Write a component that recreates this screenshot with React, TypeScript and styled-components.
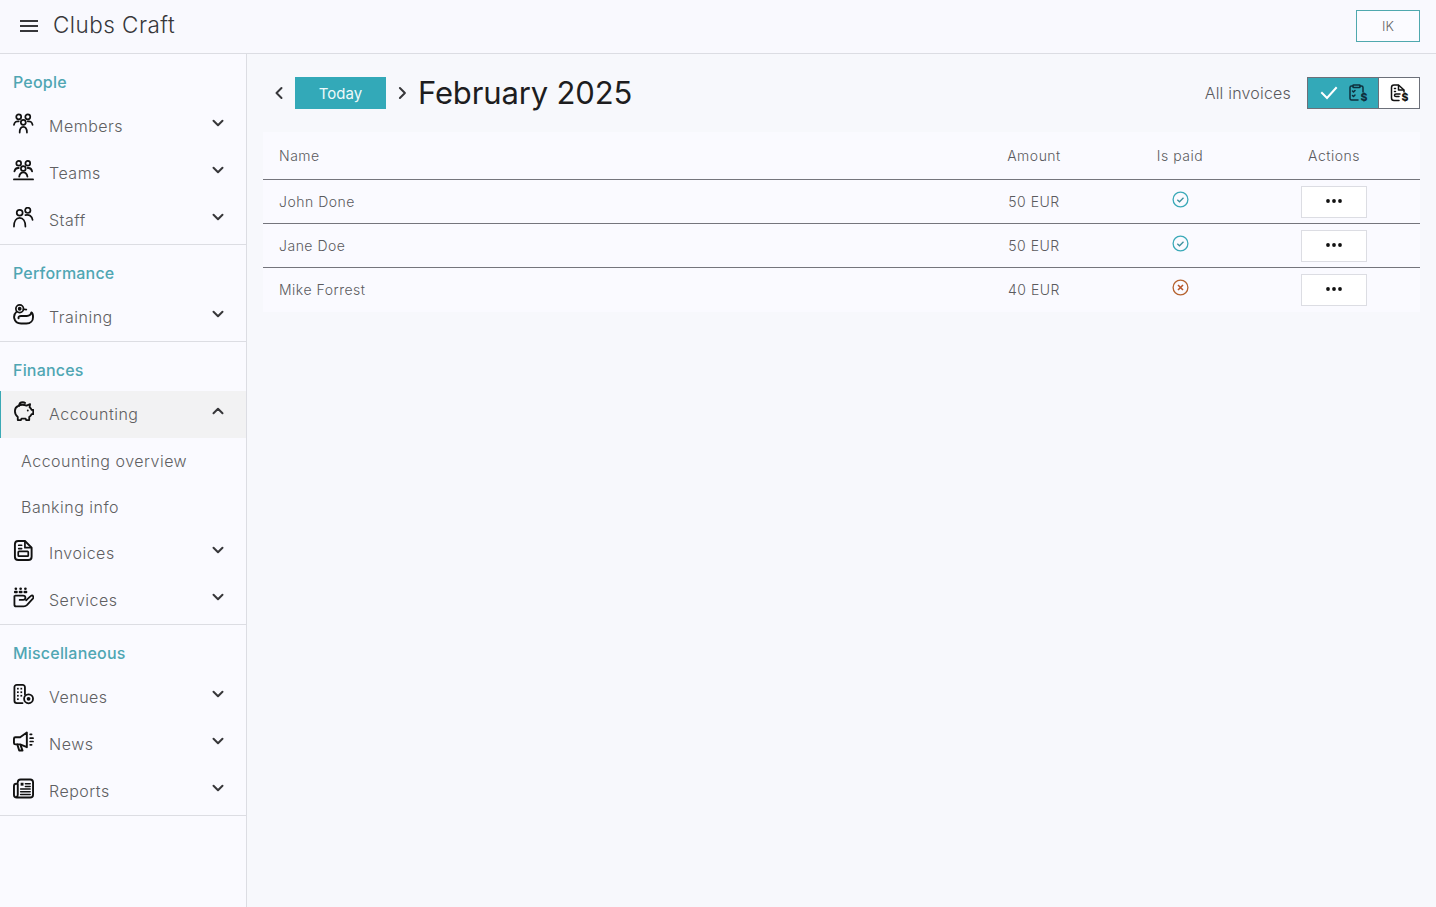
import React from "react";
import styled, { createGlobalStyle } from "styled-components";

const Global = createGlobalStyle`
  html, body { margin: 0; padding: 0; height: 100%; background: #f7f8fc; }
  body { font-family: Inter, "Open Sans", "Liberation Sans", sans-serif; font-weight: 300; color: #3a3a3a; overflow: hidden; }
  * { box-sizing: border-box; }
`;

const Page = styled.div`
  width: 1436px;
  height: 907px;
  display: flex;
  flex-direction: column;
`;
const Header = styled.header`
  height: 54px;
  flex: none;
  display: flex;
  align-items: center;
  justify-content: space-between;
  padding: 0 16px 2px 19px;
  background: #f9f9fe;
  border-bottom: 1px solid #dcdde3;
`;
const Brand = styled.div`
  display: flex;
  align-items: center;
  gap: 14px;
  font-size: 22.5px;
  letter-spacing: 0.45px;
  line-height: 30px;
  color: #37373a;
`;
const BrandText = styled.span`
  margin-top: -1px;
`;
const UserButton = styled.button`
  width: 64px;
  height: 32px;
  border: 1px solid #4fa8ae;
  background: #fbfbff;
  color: #666;
  font: 300 13px Inter, sans-serif;
`;
const Body = styled.div`
  flex: 1;
  display: flex;
  min-height: 0;
`;
const Sidebar = styled.aside`
  width: 247px;
  flex: none;
  background: #fafaff;
  border-right: 1px solid #dcdde3;
`;
const Section = styled.section`
  border-bottom: 1px solid #dcdde3;
`;
const SectionTitle = styled.h3`
  margin: 0;
  height: 49px;
  padding: 17px 0 0 13px;
  font-size: 16px;
  line-height: 22px;
  font-weight: 500;
  letter-spacing: 0.2px;
  color: #4fa6b3;
`;
const NavRow = styled.div<{ $active?: boolean }>`
  height: 47px;
  display: flex;
  align-items: center;
  padding: 0 20px 0 ${(p) => (p.$active ? 12 : 13)}px;
  background: ${(p) => (p.$active ? "#f2f2f3" : "transparent")};
  border-left: ${(p) => (p.$active ? "1px solid #3aa9b5" : "none")};
`;
const IconSlot = styled.span`
  width: 36px;
  height: 24px;
  margin-top: -6px;
  display: flex;
  align-items: center;
  color: #111;
`;
const NavLabel = styled.span`
  flex: 1;
  margin-top: -2px;
  font-size: 16px;
  letter-spacing: 0.5px;
  color: #5f5f62;
`;
const Caret = styled.span`
  display: flex;
  margin-top: -8px;
  color: #37373a;
`;
const SubRow = styled.div`
  height: 46px;
  padding-left: 21px;
  display: flex;
  align-items: center;
  font-size: 16px;
  letter-spacing: 0.5px;
  color: #5f5f62;
`;
const Main = styled.main`
  flex: 1;
  padding: 23px 16px 0;
`;
const Toolbar = styled.div`
  height: 32px;
  display: flex;
  align-items: center;
`;
const ChevronButton = styled.span`
  width: 32px;
  display: flex;
  justify-content: center;
  color: #37373a;
`;
const TodayButton = styled.button`
  width: 91px;
  height: 32px;
  padding: 0;
  border: none;
  background: #33a9b8;
  color: #eef9fa;
  font: 400 15px Inter, sans-serif;
`;
const MonthTitle = styled.h1`
  margin: -2px 0 0;
  font-size: 31px;
  font-weight: 400;
  letter-spacing: -0.15px;
  color: #1d1d20;
  flex: 1;
`;
const FilterLabel = styled.span`
  margin-right: 16px;
  font-size: 16px;
  letter-spacing: 0.2px;
  color: #5a5a5e;
`;
const Toggle = styled.div`
  width: 113px;
  height: 32px;
  display: flex;
  border: 1px solid #6c7079;
`;
const ToggleOn = styled.div`
  width: 71px;
  display: flex;
  align-items: center;
  justify-content: space-between;
  padding: 0 9px 0 12px;
  background: #33a9b8;
  border-right: 1px solid #6c7079;
`;
const ToggleOff = styled.div`
  flex: 1;
  display: flex;
  align-items: center;
  justify-content: center;
  padding-left: 1px;
  background: #fff;
`;
const Card = styled.div`
  margin-top: 23px;
  background: #fafaff;
`;
const TableRow = styled.div<{ $head?: boolean; $last?: boolean }>`
  height: ${(p) => (p.$head ? 48 : 44)}px;
  display: grid;
  grid-template-columns: 1fr 148px 144px 164px 4px;
  align-items: center;
  padding: 0 0 0 16px;
  border-bottom: 1px solid ${(p) => (p.$last ? "transparent" : "#74757c")};
  font-size: 14px;
  letter-spacing: 0.5px;
  color: #5a5a5e;
`;
const Cell = styled.div<{ $center?: boolean }>`
  display: flex;
  justify-content: ${(p) => (p.$center ? "center" : "flex-start")};
  align-items: center;
`;
const StatusCell = styled(Cell)`
  margin-top: -5px;
`;
const ActionsButton = styled.button`
  width: 66px;
  height: 32px;
  display: flex;
  align-items: center;
  justify-content: center;
  background: #fff;
  border: 1px solid #dcdde3;
  padding: 0 0 2px;
`;

const S = { fill: "none", stroke: "currentColor", strokeWidth: 1.8, strokeLinecap: "round" as const, strokeLinejoin: "round" as const };

const Ico = ({ children }: { children: React.ReactNode }) => (
  <svg width="21" height="21" viewBox="0 0 22 22" {...S}>{children}</svg>
);

const Members = () => (
  <Ico>
    <circle cx="6" cy="4" r="2.600" /><circle cx="15.500" cy="4" r="2.600" /><circle cx="10.800" cy="9.800" r="2.600" />
    <path d="M1 12.500c.5-3 2.500-4.200 5-3.700M20.500 12.500c-.5-3-2.500-4.200-5-3.700M7 20.500c0-3.500 1.500-6 3.800-6s3.800 2.500 3.800 6" />
  </Ico>
);
const Teams = () => (
  <Ico>
    <circle cx="6" cy="3.500" r="2.500" /><circle cx="15.500" cy="3.500" r="2.500" /><circle cx="10.800" cy="9" r="2.500" />
    <path d="M1.500 12c.5-2.800 2-3.900 4.500-3.600M20 12c-.5-2.800-2-3.900-4.500-3.600M6.500 17.500c.5-3 2-4.500 4.300-4.500s3.800 1.500 4.300 4.500M1 20.300h20" strokeWidth="1.900" />
  </Ico>
);
const Staff = () => (
  <Ico>
    <circle cx="7" cy="6" r="3.100" /><circle cx="15.500" cy="3.500" r="2.800" />
    <path d="M1 20.500c0-5.500 2.400-9 6-9s6 3.500 6 9M13 8.500c4-.8 7 1 7.500 5" />
  </Ico>
);
const Training = () => (
  <Ico>
    <circle cx="7" cy="5" r="4" /><circle cx="7" cy="5" r="1.100" fill="currentColor" />
    <path d="M3.800 8C1.500 10 .8 12.500 1.300 15c.8 3.500 3.500 5.500 7.200 5.500h5.500c4.500 0 7-3 7-7 0-2.500-.6-4-1.800-4.700-.5 2.700-2.200 3.700-4.700 3.700H8.500c-2.200 0-3 1-2.700 2.500" strokeWidth="2" />
    <path d="M11 5.500l3 .3" />
  </Ico>
);
const Piggy = () => (
  <Ico>
    <path d="M2 10.500c0 2.800 1.200 4.900 3 6.300v3.200h3.200l.7-1.500h4.300l.7 1.500H17v-3.200c1.100-.8 2-1.900 2.500-3.100h1.700V9.200h-1.700c-.5-1.100-1.200-2-2.100-2.700l.5-3.200-3.700 1.500c-2.800-1-6.500-1-8.700.3C3.500 6 2 8 2 10.500z" strokeWidth="1.900" />
    <path d="M6.500 5c0-2.200 1.700-3.700 3.800-3.700 1 0 1.800.3 2.400.8" strokeWidth="1.900" />
    <circle cx="15.500" cy="10" r="1" fill="currentColor" stroke="none" />
  </Ico>
);
const Invoice = () => (
  <Ico>
    <path d="M5.500 1H12.500l7 7v9.500c0 2-1.500 3.500-3.500 3.500H5.500c-2 0-3.500-1.500-3.500-3.500v-13C2 2.500 3.500 1 5.500 1z" strokeWidth="2" />
    <path d="M12.500 1.500V8h6.500M6 5.500h3M6 9h3" />
    <rect x="5.500" y="12" width="10.500" height="5" rx=".8" />
  </Ico>
);
const Services = () => (
  <Ico>
    <g fill="currentColor" stroke="none">
      <circle cx="3" cy="1.800" r="1.400" /><circle cx="8" cy="1.800" r="1.400" /><circle cx="13" cy="1.800" r="1.400" />
      <rect x="1" y="4" width="4" height="2.600" rx="1" /><rect x="6" y="4" width="4" height="2.600" rx="1" /><rect x="11" y="4" width="4" height="2.600" rx="1" />
    </g>
    <path d="M2.500 9h8c1.500 0 2.500 1 2.500 2.300S12 13.500 10.500 13.500H7" strokeWidth="1.900" />
    <path d="M1.500 9.500v9c0 1 .7 1.800 1.800 1.800h8c1.500 0 2.500-.6 3.500-1.600l6-6.500c1.300-1.500.2-3.700-1.500-3.200-.7.200-1.300.7-5.500 5" strokeWidth="1.900" />
  </Ico>
);
const Venues = () => (
  <Ico>
    <path d="M12.500 11V3.500C12.500 2 11.500 1 10 1H4C2.500 1 1.500 2 1.500 3.500v14c0 1.500 1 2.500 2.500 2.500h6" strokeWidth="1.900" />
    <circle cx="16.300" cy="15.500" r="4.700" strokeWidth="1.900" /><circle cx="16.300" cy="15.500" r="1.100" fill="currentColor" />
    <g fill="currentColor" stroke="none">
      <rect x="4.200" y="4" width="1.800" height="1.800" /><rect x="7.800" y="4" width="1.800" height="1.800" />
      <rect x="4.200" y="7.700" width="1.800" height="1.800" /><rect x="7.800" y="7.700" width="1.800" height="1.800" />
      <rect x="4.200" y="11.400" width="1.800" height="1.800" /><rect x="7.800" y="11.400" width="1.800" height="1.800" />
      <rect x="4.200" y="15" width="1.800" height="1.800" />
    </g>
  </Ico>
);
const News = () => (
  <Ico>
    <path d="M14.500 1.500v15.500L7.500 14H2.500C1.500 14 1 13.400 1 12.500V8c0-1 .5-1.500 1.500-1.500h5z" strokeWidth="2" />
    <path d="M4.500 14l2 6.500h3.500l-2-5.500" strokeWidth="2" />
    <path d="M18 3.500h1.500M18 7.500h3M18 11h3M18 14.500h1.500" strokeWidth="1.800" />
  </Ico>
);
const Reports = () => (
  <Ico>
    <path d="M5 4.500c0-2 1-3 3-3h10c2 0 3 1 3 3v13c0 2-1 3-3 3H4c-2 0-3-1-3-3V8.500C1 7 2 6 3.500 6H5v11.500c0 1-.5 2-1.500 2.500" strokeWidth="2" />
    <rect x="8" y="5" width="3" height="3" fill="currentColor" stroke="none" />
    <path d="M13 6h5M13 9h5M8 11.500h10M8 14.500h10M8 17.200h10" strokeWidth="1.600" />
  </Ico>
);

const Down = () => (
  <svg width="16" height="16" viewBox="0 0 16 16" fill="none" stroke="currentColor" strokeWidth="2" strokeLinecap="round" strokeLinejoin="round"><path d="M3.500 5.700l4.500 4.500 4.500-4.500" /></svg>
);
const Up = () => (
  <svg width="16" height="16" viewBox="0 0 16 16" fill="none" stroke="currentColor" strokeWidth="2" strokeLinecap="round" strokeLinejoin="round"><path d="M3.500 10.300l4.500-4.500 4.500 4.500" /></svg>
);

const Menu = () => (
  <svg width="20" height="14" viewBox="0 0 20 14" stroke="#37373a" strokeWidth="2"><path d="M1 2h18M1 7h18M1 12h18" /></svg>
);
const Left = () => (
  <svg width="12" height="14" viewBox="0 0 12 14" fill="none" stroke="currentColor" strokeWidth="2" strokeLinecap="round" strokeLinejoin="round"><path d="M8.500 2l-5 5 5 5" /></svg>
);
const Right = () => (
  <svg width="12" height="14" viewBox="0 0 12 14" fill="none" stroke="currentColor" strokeWidth="2" strokeLinecap="round" strokeLinejoin="round"><path d="M3.900 2l5 5-5 5" /></svg>
);

const Check = () => (
  <svg width="18" height="14" viewBox="0 0 18 14" fill="none" stroke="#fff" strokeWidth="2" strokeLinecap="square"><path d="M2 7l5 5 9-10" /></svg>
);
const PaidList = () => (
  <svg width="20" height="22" viewBox="0 0 20 22" fill="none" stroke="#0e2f3d" strokeWidth="1.500" strokeLinecap="round" strokeLinejoin="round">
    <path d="M4 4H2.500C1.500 4 1 4.600 1 5.500v11c0 1 .5 1.500 1.500 1.500H9M11 4h1.500c1 0 1.500.6 1.500 1.500V10" />
    <rect x="4" y="3" width="7" height="2.500" rx=".5" />
    <path d="M3.500 9l1 1 1.500-1.500M3.500 13.500l1 1 1.500-1.500" />
    <text x="11.500" y="18.500" fontSize="10.500" fontWeight="800" fill="#0e2f3d" stroke="none" fontFamily="Inter, sans-serif">$</text>
  </svg>
);
const OpenList = () => (
  <svg width="20" height="22" viewBox="0 0 20 22" fill="none" stroke="#111" strokeWidth="1.500" strokeLinecap="round" strokeLinejoin="round">
    <path d="M9 18.500H4c-1.500 0-2.500-1-2.500-2.500V5.500C1.500 4 2.500 3 4 3h4.500l5.500 5v2" />
    <path d="M8.500 3.500V8h5M4.500 6.500h1M4.500 9.500h1M10 12H6c-1 0-1.500.5-1.500 1.300s.5 1.300 1.500 1.300h3" />
    <text x="11.500" y="18.500" fontSize="10.500" fontWeight="800" fill="#111" stroke="none" fontFamily="Inter, sans-serif">$</text>
  </svg>
);

const StatusIcon = ({ paid }: { paid: boolean }) => (
  <svg width="17" height="17" viewBox="0 0 17 17" fill="none" strokeWidth="1.300" stroke={paid ? "#3aa9b8" : "#b5622f"}>
    <circle cx="8.500" cy="8.500" r="7.400" />
    {paid ? (
      <path d="M5.300 8.800l2.200 2 4-4" stroke="#3c8f9c" strokeWidth="1.300" />
    ) : (
      <path d="M6 6l5 5M11 6l-5 5" stroke="#b9562a" strokeWidth="1.600" />
    )}
  </svg>
);
const Dots = () => (
  <svg width="16" height="4" viewBox="0 0 16 4" fill="#111"><circle cx="2" cy="2" r="1.900" /><circle cx="8" cy="2" r="1.900" /><circle cx="14" cy="2" r="1.900" /></svg>
);

const NavItem = ({ icon, label, active }: { icon: React.ReactNode; label: string; active?: boolean }) => (
  <NavRow $active={active}>
    <IconSlot>{icon}</IconSlot>
    <NavLabel>{label}</NavLabel>
    <Caret>{active ? <Up /> : <Down />}</Caret>
  </NavRow>
);

const rows = [
  { name: "John Done", amount: "50 EUR", paid: true },
  { name: "Jane Doe", amount: "50 EUR", paid: true },
  { name: "Mike Forrest", amount: "40 EUR", paid: false },
];

export default function App() {
  return (
    <Page>
      <Global />
      <Header>
        <Brand><Menu /><BrandText>Clubs Craft</BrandText></Brand>
        <UserButton>IK</UserButton>
      </Header>
      <Body>
        <Sidebar>
          <Section>
            <SectionTitle>People</SectionTitle>
            <NavItem icon={<Members />} label="Members" />
            <NavItem icon={<Teams />} label="Teams" />
            <NavItem icon={<Staff />} label="Staff" />
          </Section>
          <Section>
            <SectionTitle>Performance</SectionTitle>
            <NavItem icon={<Training />} label="Training" />
          </Section>
          <Section>
            <SectionTitle>Finances</SectionTitle>
            <NavItem icon={<Piggy />} label="Accounting" active />
            <SubRow>Accounting overview</SubRow>
            <SubRow>Banking info</SubRow>
            <NavItem icon={<Invoice />} label="Invoices" />
            <NavItem icon={<Services />} label="Services" />
          </Section>
          <Section>
            <SectionTitle>Miscellaneous</SectionTitle>
            <NavItem icon={<Venues />} label="Venues" />
            <NavItem icon={<News />} label="News" />
            <NavItem icon={<Reports />} label="Reports" />
          </Section>
        </Sidebar>
        <Main>
          <Toolbar>
            <ChevronButton><Left /></ChevronButton>
            <TodayButton>Today</TodayButton>
            <ChevronButton><Right /></ChevronButton>
            <MonthTitle>February 2025</MonthTitle>
            <FilterLabel>All invoices</FilterLabel>
            <Toggle>
              <ToggleOn><Check /><PaidList /></ToggleOn>
              <ToggleOff><OpenList /></ToggleOff>
            </Toggle>
          </Toolbar>
          <Card>
            <TableRow $head>
              <Cell>Name</Cell>
              <Cell $center>Amount</Cell>
              <Cell $center>Is paid</Cell>
              <Cell $center>Actions</Cell>
            </TableRow>
            {rows.map((r, i) => (
              <TableRow key={r.name} $last={i === rows.length - 1}>
                <Cell>{r.name}</Cell>
                <Cell $center>{r.amount}</Cell>
                <StatusCell $center><StatusIcon paid={r.paid} /></StatusCell>
                <Cell $center><ActionsButton><Dots /></ActionsButton></Cell>
              </TableRow>
            ))}
          </Card>
        </Main>
      </Body>
    </Page>
  );
}
